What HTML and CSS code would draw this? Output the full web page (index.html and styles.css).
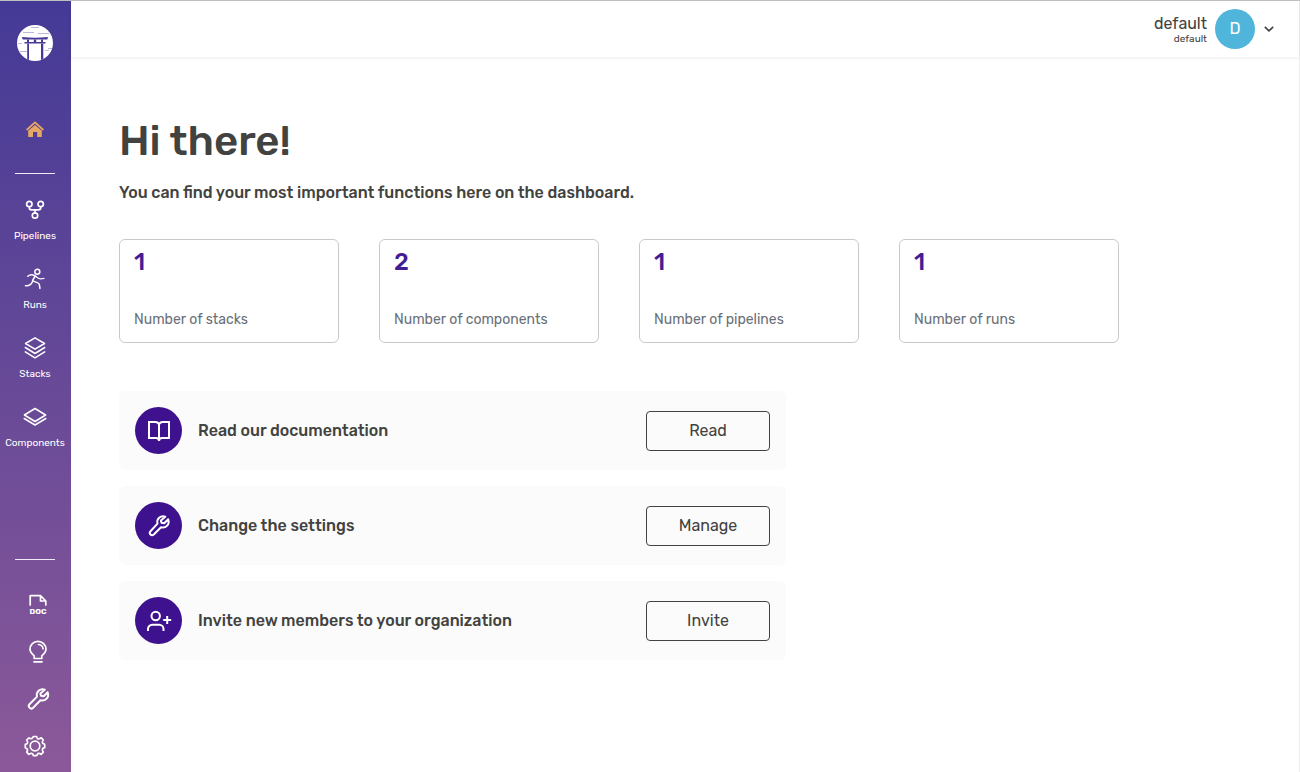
FILE: index.html
```html
<!DOCTYPE html>
<html lang="en">
<head>
<meta charset="utf-8">
<title>Dashboard</title>
<link rel="stylesheet" href="styles.css">
</head>
<body>
<div class="app">
  <nav class="sidebar" aria-label="Main">
    <a class="logo" href="#" aria-label="Start">
      <svg width="36" height="36" viewBox="0 0 36 36">
        <circle cx="18" cy="18" r="18" fill="#fff"/>
        <g stroke="#473a96" stroke-width=".6" opacity=".6"><path d="M14 2.500h8M6 7.500h11M21 8.500h11M1 18.500h4M31 23.500h4M28 25.500h4M3 26.500h7"/></g>
        <g fill="#473a96"><path d="M5 12q13 1.500 26 0l-.7 2.600H5.700z"/><path d="M10 14.500h2V17h-2zM16.800 14.500h2.400V17h-2.400zM24 14.500h2V17h-2z"/><path d="M7.500 17h21v1.500h-21z"/><path d="M10.200 18.500h1.800v16.500l-1.800-.8zM24 18.500h2.300v15.700l-2.300.8z"/></g>
      </svg>
    </a>
    <a class="home" href="#" aria-label="Home">
      <svg width="18" height="18" viewBox="0 0 18 18"><path d="M9 5 15.800 10.700V17H11.200V12H7V17H2.200V10.700z" fill="#e8a765"/><path d="M.6 10 9 2.300 17.400 10" fill="none" stroke="#e8a765" stroke-width="1.700"/></svg>
    </a>
    <hr class="divider">
    <ul class="menu">
      <li><a href="#"><svg width="24" height="24" viewBox="0 0 24 24" class="line"><circle cx="6.300" cy="6" r="2.700"/><circle cx="17.700" cy="6" r="2.700"/><circle cx="12" cy="17.500" r="2.700"/><path d="M6.300 8.800v1a2 2 0 0 0 2 2h7.400a2 2 0 0 0 2-2v-1M12 11.800v3"/></svg><span>Pipelines</span></a></li>
      <li><a href="#"><svg width="24" height="24" viewBox="0 0 24 24" class="line thin"><circle cx="14.300" cy="4.800" r="2.500"/><path d="M4.800 9.200c2-1.700 4.500-1.900 7-.5 3.200 1.800 3 4.500 9 2.700M12.200 9 9.600 13.300c1.200 2 6.200 1.700 6.700 4 .2 1.500.6 3 .6 4.200M9.500 14.500c-1.300 3.500-3.700 4.500-7 4.200"/></svg><span>Runs</span></a></li>
      <li><a href="#"><svg width="24" height="24" viewBox="0 0 24 24" class="line thin"><path d="M12 1.800 21.500 7.500 12 13.200 2.500 7.500zM2.300 11.500 12 17.500l9.700-6M2.300 15.800 12 21.800l9.700-6"/></svg><span>Stacks</span></a></li>
      <li><a href="#"><svg width="24" height="24" viewBox="0 0 24 24" class="line thin"><path d="M12 3.500 22.600 10 12 16.500 1.400 10zM1.200 13.500 12 20l10.800-6.500"/></svg><span>Components</span></a></li>
    </ul>
    <div class="tools">
      <hr class="divider">
      <a href="#" aria-label="Documentation"><svg width="24" height="24" viewBox="0 0 24 24" class="line"><path d="M4.200 12V2.700H14.500L19.800 8v4M14.500 3V8h5"/><text x="12" y="20.500" text-anchor="middle" class="doc">DOC</text></svg></a>
      <a href="#" aria-label="Ideas"><svg width="24" height="24" viewBox="0 0 24 24" class="line bulb"><path d="M8.200 18.500v-2.700C6 14 4 12.200 4 9.300a8 8 0 0 1 16 0c0 2.900-2 4.700-4.200 6.500v2.700zM12.500 4.500c2.500.2 4.300 2 4.500 4.300M8 21.800h8"/></svg></a>
      <a href="#" aria-label="Tools"><svg width="24" height="24" viewBox="0 0 24 24" class="line wrench"><path d="M18.800 2.700c-4.800-1.500-9 2.300-7.800 6.900L3.500 17.200c-2.100 2.200.9 5.900 3.500 3.700l7.500-7.600c5 1.200 9-3.200 7.200-8l-4 4-2.700-.5-.6-2.400z"/></svg></a>
      <a class="gear" href="#" aria-label="Settings"><svg width="24" height="24" viewBox="0 0 24 24" class="line"><circle cx="12" cy="12" r="4.800"/><path d="M10.300 2.500h3.400q.3 2.900 2.600 2.300l2-.9 2 2.100q-2 2.400.1 3.700l1.300.6v3.400q-2.900.5-2.200 2.800l.8 1.700-2.200 2.100q-2.500-1.800-3.700.1l-.7 1.300h-3.400q-.5-2.900-2.800-2.200l-1.700.8-2.100-2.200q1.700-2.300-.1-3.700l-1.300-.7v-3.400q2.900-.4 2.200-2.700L3.700 6l2.200-2.100q2.300 1.700 3.700-.1z"/></svg></a>
    </div>
  </nav>
  <div class="page">
    <header class="topbar">
      <div class="account"><span class="user">default</span><span class="org">default</span></div>
      <span class="avatar">D</span>
      <button class="more" type="button" aria-label="Account menu"><svg width="10" height="6" viewBox="0 0 10 6"><path d="M.8.800 5 4.800 9.200.8" fill="none" stroke="#424240" stroke-width="1.600"/></svg></button>
    </header>
    <main class="content">
      <h1>Hi there!</h1>
      <p class="intro">You can find your most important functions here on the dashboard.</p>
      <section class="stats" aria-label="Totals">
        <div class="stat"><strong>1</strong><span>Number of stacks</span></div>
        <div class="stat"><strong>2</strong><span>Number of components</span></div>
        <div class="stat"><strong>1</strong><span>Number of pipelines</span></div>
        <div class="stat"><strong>1</strong><span>Number of runs</span></div>
      </section>
      <section class="actions" aria-label="Actions">
        <div class="action">
          <span class="badge"><svg width="24" height="24" viewBox="0 0 24 24" class="line bold"><path d="M12 5.500Q11 3 8.500 3H2v16h7q3 0 3 3 0-3 3-3h7V3h-6.500Q13 3 12 5.500zV21"/></svg></span>
          <h2>Read our documentation</h2><button type="button">Read</button>
        </div>
        <div class="action">
          <span class="badge"><svg width="24" height="24" viewBox="0 0 24 24" class="line wrench"><path d="M18.300 2.700c-4.800-1.500-9 2.300-7.800 6.900L3.500 17.200c-2.100 2.200.9 5.400 3.300 3.300l7.200-7.200c5 1.200 9-3.200 7.200-8l-4 4-2.700-.5-.6-2.400z"/></svg></span>
          <h2>Change the settings</h2><button type="button">Manage</button>
        </div>
        <div class="action">
          <span class="badge"><svg width="24" height="24" viewBox="0 0 24 24" class="line bold"><circle cx="8.700" cy="7" r="4.200"/><path d="M1 22v-2a4.300 4.300 0 0 1 4.300-4.300h6.900a4.300 4.300 0 0 1 4.300 4.300v2M20.200 7v8M16.200 11h8"/></svg></span>
          <h2>Invite new members to your organization</h2><button type="button">Invite</button>
        </div>
      </section>
    </main>
  </div>
</div>
</body>
</html>
```
FILE: styles.css
```css
* { box-sizing: border-box; }
body { margin: 0; color: #424240; background: #fff; font-family: Rubik, Roboto, sans-serif; font-size: 16px; }
h1, h2, p, ul { margin: 0; padding: 0; }
a { color: inherit; text-decoration: none; }
svg { display: block; overflow: visible; }
button { font: inherit; color: inherit; cursor: pointer; }
.app { display: flex; min-height: 100vh; border-top: 1px solid #c0c0c0; }
.sidebar { flex: none; width: 71px; padding: 24px 1px 14px 0; display: flex; flex-direction: column; align-items: center; color: #fff; background: linear-gradient(#443a96, #8b5999); }
.home { margin-top: 59px; }
.divider { width: 40px; height: 1px; margin: 0; border: 0; background: #efeaf6; }
.home + .divider { margin-top: 35px; }
.menu { list-style: none; margin-top: 24px; display: flex; flex-direction: column; gap: 25px; font-size: 10px; line-height: 12px; }
.menu a { display: flex; flex-direction: column; align-items: center; gap: 8px; }
.line { fill: none; stroke: currentColor; stroke-width: 1.7; stroke-linejoin: round; stroke-linecap: round; }
.thin { stroke-width: 1.5; }
.wrench { stroke-width: 2; }
.bold { stroke-width: 2; stroke-linejoin: miter; stroke-linecap: butt; }
.doc { font: bold 8px Rubik, sans-serif; fill: currentColor; stroke: none; }
.tools { margin-top: auto; display: flex; flex-direction: column; align-items: center; gap: 23px; }
.tools .divider { margin-bottom: 10px; }
.tools a:not(.gear) { padding-left: 6px; }
.page { flex: 1; min-width: 0; border-right: 1px solid #ededed; }
.topbar { height: 56px; padding: 0 25px 0 16px; display: flex; justify-content: flex-end; align-items: center; box-shadow: 0 1px 4px rgba(0, 0, 0, .08); }
.account { display: flex; flex-direction: column; align-items: flex-end; margin-right: 8px; padding-top: 1px; }
.user { line-height: 20px; }
.org { font-size: 10px; line-height: 11px; }
.avatar { width: 40px; height: 40px; padding-bottom: 2px; border-radius: 50%; background: #50b5da; color: #fff; display: flex; align-items: center; justify-content: center; }
.more { margin-left: 9px; padding: 0; border: 0; background: none; }
.content { padding: 58px 48px; }
h1 { font-size: 42px; line-height: 52px; font-weight: 500; }
.intro { margin-top: 14px; line-height: 24px; font-weight: 500; }
.stats { margin-top: 34px; display: flex; gap: 40px; }
.stat { flex: 0 1 220px; min-height: 104px; padding: 7px 14px 12px; border: 1px solid #c9c9cd; border-radius: 6px; display: flex; flex-direction: column; justify-content: space-between; }
.stat strong { font-size: 24px; line-height: 30px; font-weight: 500; color: #431d93; }
.stat span { font-size: 14px; line-height: 20px; color: #6b7078; }
.actions { margin-top: 48px; max-width: 667px; display: flex; flex-direction: column; gap: 16px; }
.action { padding: 16px; display: flex; align-items: center; gap: 16px; background: #fbfbfb; border-radius: 6px; }
.badge { flex: none; width: 47px; height: 47px; border-radius: 50%; background: #3e128e; color: #fff; display: flex; align-items: center; justify-content: center; }
.action h2 { flex: 1; font-size: 16px; line-height: 22px; font-weight: 500; }
.action button { width: 124px; height: 40px; border: 1px solid #424240; border-radius: 4px; background: transparent; }
```
